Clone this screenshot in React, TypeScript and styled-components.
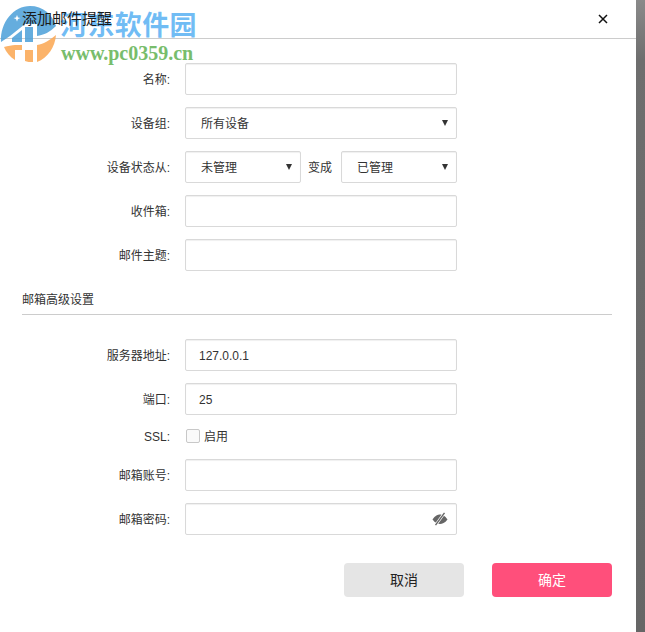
import styled, { createGlobalStyle } from "styled-components"

const GlobalStyle = createGlobalStyle`
    html, body {
        margin: 0;
        padding: 0;
        background: #fff;
    }
`

const Page = styled.div`
    position: relative;
    display: flex;
    width: 645px;
    height: 632px;
    overflow: hidden;
    font-family: "Liberation Sans", "Noto Sans CJK SC", sans-serif;
    font-size: 12px;
    line-height: 16px;
    color: #333;
`

const Dialog = styled.div`
    width: 636px;
    background: #fff;
`

const Backdrop = styled.div`
    width: 9px;
    background: linear-gradient(to bottom, #8a8a8a 0, #6e6e6e 60px, #666 100%);
`

const Header = styled.div`
    display: flex;
    justify-content: space-between;
    align-items: center;
    height: 38px;
    padding: 0 28px 0 22px;
    border-bottom: 1px solid #ccc;
`

const Title = styled.div`
    position: relative;
    z-index: 1;
    font-size: 15px;
    line-height: 20px;
    color: #1a1a1a;
`

const CloseIcon = styled.svg`
    width: 10px;
    height: 10px;
`

const Form = styled.div`
    display: flex;
    flex-direction: column;
    padding-top: 24px;
`

const Group = styled.div`
    display: flex;
    flex-direction: column;
    gap: 12px;
`

const Row = styled.div`
    display: flex;
    align-items: center;
    gap: 15px;
    min-height: 32px;
`

const Label = styled.div`
    width: 170px;
    padding-top: 2px;
    text-align: right;
`

const CheckLabel = styled(Label)`
    padding-top: 0;
`

const Field = styled.div<{ $width?: number }>`
    display: flex;
    align-items: center;
    justify-content: space-between;
    box-sizing: border-box;
    width: ${({ $width }) => $width ?? 272}px;
    height: 32px;
    padding: 0 9px 0 15px;
    border: 1px solid #d9d9d9;
    border-radius: 2px;
    background: #fff;
    box-shadow: inset 0 1px 1px #f0f0f0;
`

const FieldText = styled.span`
    padding-top: 2px;
`

const PlainValue = styled(FieldText)`
    margin-left: -2px;
`

const Arrow = styled.span`
    width: 0;
    height: 0;
    border-left: 3px solid transparent;
    border-right: 3px solid transparent;
    border-top: 6px solid #333;
    margin-right: -1px;
`

const Pair = styled.div`
    display: flex;
    align-items: center;
    gap: 7px;
`

const PairWord = styled.span`
    margin-right: 2px;
    padding-top: 2px;
`

const SectionTitle = styled.div`
    margin: 20px 0 0 22px;
    width: 590px;
    height: 23px;
    line-height: 18px;
    border-bottom: 1px solid #ccc;
`

const AdvancedGroup = styled(Group)`
    margin-top: 24px;
`

const CheckRow = styled(Row)`
    min-height: 20px;
`

const CheckWrap = styled.label`
    display: flex;
    align-items: center;
    gap: 4px;
    margin-left: 1px;
`

const CheckBox = styled.span`
    box-sizing: border-box;
    width: 14px;
    height: 14px;
    margin-bottom: 3px;
    border: 1px solid #c8c8c8;
    border-radius: 2px;
    background: #fafafa;
`

const EyeIcon = styled.svg`
    width: 16px;
    height: 14px;
    margin-right: -1px;
`

const Actions = styled.div`
    display: flex;
    justify-content: flex-end;
    gap: 28px;
    width: 612px;
    margin-top: 28px;
`

const Button = styled.div<{ $primary?: boolean }>`
    display: flex;
    align-items: center;
    justify-content: center;
    width: 120px;
    height: 34px;
    border-radius: 4px;
    font-size: 14px;
    background: ${({ $primary }) => ($primary ? "#ff4f7b" : "#e5e5e5")};
    color: ${({ $primary }) => ($primary ? "#fff" : "#222")};
`

const Watermark = styled.div`
    position: absolute;
    top: 0;
    left: 0;
    width: 200px;
    height: 66px;
    pointer-events: none;
`

const WatermarkLogo = styled.svg`
    position: absolute;
    top: 0;
    left: 0;
    width: 60px;
    height: 66px;
`

const WatermarkName = styled.div`
    position: absolute;
    left: 60px;
    top: 6px;
    font-family: "Noto Sans CJK SC", sans-serif;
    font-size: 27px;
    line-height: 36px;
    font-weight: 700;
    letter-spacing: 0.4px;
    white-space: nowrap;
    color: rgba(74, 170, 242, 0.78);
`

const WatermarkUrl = styled.div`
    position: absolute;
    left: 61px;
    top: 43px;
    font-family: "Liberation Serif", serif;
    font-size: 20px;
    line-height: 20px;
    font-weight: 700;
    white-space: nowrap;
    color: #78bd6c;
`

const FormRow = ({ label, value }: { label: string; value?: string }) => (
    <Row>
        <Label>{label}:</Label>
        <Field>
            <PlainValue>{value}</PlainValue>
        </Field>
    </Row>
)

const SelectBox = ({ value, width }: { value: string; width?: number }) => (
    <Field $width={width}>
        <FieldText>{value}</FieldText>
        <Arrow />
    </Field>
)

export default function App() {
    return (
        <Page>
            <GlobalStyle />
            <Dialog>
                <Header>
                    <Title>添加邮件提醒</Title>
                    <CloseIcon viewBox="0 0 10 10">
                        <path d="M1 1 L9 9 M9 1 L1 9" stroke="#111" strokeWidth="1.5" fill="none" />
                    </CloseIcon>
                </Header>
                <Form>
                    <Group>
                        <FormRow label="名称" />
                        <Row>
                            <Label>设备组:</Label>
                            <SelectBox value="所有设备" />
                        </Row>
                        <Row>
                            <Label>设备状态从:</Label>
                            <Pair>
                                <SelectBox value="未管理" width={116} />
                                <PairWord>变成</PairWord>
                                <SelectBox value="已管理" width={116} />
                            </Pair>
                        </Row>
                        <FormRow label="收件箱" />
                        <FormRow label="邮件主题" />
                    </Group>
                    <SectionTitle>邮箱高级设置</SectionTitle>
                    <AdvancedGroup>
                        <FormRow label="服务器地址" value="127.0.0.1" />
                        <FormRow label="端口" value="25" />
                        <CheckRow>
                            <CheckLabel>SSL:</CheckLabel>
                            <CheckWrap>
                                <CheckBox />
                                启用
                            </CheckWrap>
                        </CheckRow>
                        <FormRow label="邮箱账号" />
                        <Row>
                            <Label>邮箱密码:</Label>
                            <Field>
                                <span />
                                <EyeIcon viewBox="0 0 16 14">
                                    <path
                                        d="M0.5 7.5 C3 3.5 6 2.5 8 2.5 C10 2.5 13 3.5 15.5 7.5 C13 11 10 12 8 12 C6 12 3 11 0.5 7.5 Z"
                                        fill="#666"
                                    />
                                    <path d="M12.5 0.8 L3.5 13.2" stroke="#fff" strokeWidth="2.8" />
                                    <path d="M12.5 0.8 L3.5 13.2" stroke="#666" strokeWidth="1.4" />
                                </EyeIcon>
                            </Field>
                        </Row>
                    </AdvancedGroup>
                    <Actions>
                        <Button>取消</Button>
                        <Button $primary>确定</Button>
                    </Actions>
                </Form>
            </Dialog>
            <Backdrop />
            <Watermark>
                <WatermarkLogo viewBox="0 0 60 66">
                    <path
                        fillRule="evenodd"
                        d="M1 42 C0 22 14 6 30 6 C43 6 52 14 56 26 C50 32 44 35 37 36 L37 24 L25 24 L10 36 Z M17 15 L18 17.5 L20.5 18 L18 19 L17 21.5 L16 19 L13.5 18 L16 17.5 Z"
                        fill="#4a9fd8"
                        fillOpacity="0.85"
                    />
                    <path d="M25 27 L33 27 L33 42 L25 42 Z" fill="#4a9fd8" fillOpacity="0.85" />
                    <path d="M12 38 L22 30 L22 42 L12 42 Z" fill="#4a9fd8" fillOpacity="0.85" />
                    <path
                        d="M4 47 C8 46 12 45 15 45 L22 45 L22 50 L15 50 L15 60 C10 57 6 52 4 47 Z"
                        fill="#fbab5a"
                        fillOpacity="0.9"
                    />
                    <path d="M25 50 L33 50 L33 62 C30 62 27 62 25 61 Z" fill="#fbab5a" fillOpacity="0.9" />
                    <path
                        d="M37 45 C44 44 50 40 56 35 C55 47 48 58 37 62 Z"
                        fill="#fbab5a"
                        fillOpacity="0.9"
                    />
                </WatermarkLogo>
                <WatermarkName>河东软件园</WatermarkName>
                <WatermarkUrl>www.pc0359.cn</WatermarkUrl>
            </Watermark>
        </Page>
    )
}
